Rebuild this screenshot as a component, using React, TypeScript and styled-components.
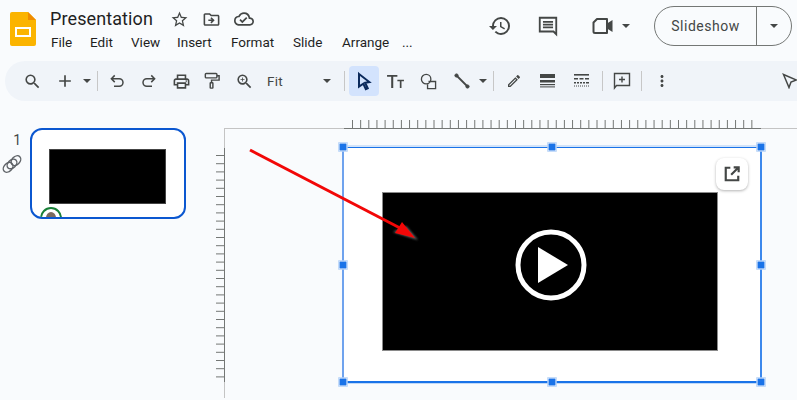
import React from "react";
import styled, { createGlobalStyle } from "styled-components";
import {
  MdSearch, MdAdd, MdOutlinePrint, MdZoomIn, MdStarBorder,
  MdOutlineDriveFileMove, MdOutlineCloudDone, MdHistory, MdMoreVert,
  MdOutlineEdit,
} from "react-icons/md";

const Global = createGlobalStyle`
  html, body { margin: 0; padding: 0; width: 797px; height: 400px; overflow: hidden; background: #f9fbfd; }
  * { box-sizing: border-box; }
  body { font-family: Roboto, "Liberation Sans", sans-serif; color: #1f1f1f; }
`;

const Page = styled.div`
  width: 797px; height: 400px; overflow: hidden; display: flex; flex-direction: column; background: #f9fbfd;
`;
const Header = styled.header`
  height: 61px; flex: none; display: flex; align-items: flex-start; padding: 6px 0 0 10px;
`;
const Logo = styled.svg`
  width: 26px; height: 34px; margin-top: 6px; flex: none;
`;
const TitleBlock = styled.div`
  margin-left: 14px; width: 395px; display: flex; flex-direction: column;
`;
const TitleRow = styled.div`
  display: flex; align-items: center; height: 26px;
`;
const Title = styled.span`
  font-size: 18px; line-height: 26px; color: #1f1f1f; width: 120px; letter-spacing: 0.1px;
`;
const TitleIcons = styled.div`
  display: flex; align-items: center; gap: 13px; color: #444746; font-size: 18px;
  svg { display: block; }
`;
const Menu = styled.nav`
  display: flex; font-size: 13.5px; line-height: 18px; margin-top: 1px; margin-left: 1px; color: #1f1f1f; white-space: nowrap;
`;
const MenuItem = styled.span<{ $w: number }>`
  width: ${(p) => p.$w}px;
`;
const Actions = styled.div`
  display: flex; align-items: center; margin-left: 43px; color: #444746; height: 40px;
`;
const ActionIcon = styled.span<{ $w: number }>`
  width: ${(p) => p.$w}px; display: flex; align-items: center; font-size: 24px;
  svg { display: block; }
`;
const Caret = styled.span`
  display: inline-block; width: 0; height: 0; flex: none;
  border-left: 4px solid transparent; border-right: 4px solid transparent; border-top: 4px solid #444746;
`;
const SlideshowGroup = styled.div`
  margin-left: 24px; width: 138px; height: 40px; border: 1px solid #747775; border-radius: 20px;
  display: flex; align-items: stretch; font-size: 14px; color: #444746; flex: none;
`;
const SlideshowMain = styled.div`
  width: 102px; display: flex; align-items: center; justify-content: center;
  border-right: 1px solid #747775; letter-spacing: 0.5px;
`;
const SlideshowCaret = styled.div`
  flex: 1; display: flex; align-items: center; justify-content: center;
`;
const Toolbar = styled.div`
  height: 40px; flex: none; margin-left: 5px; background: #f0f4f9; border-radius: 20px 0 0 20px;
  display: flex; align-items: center; padding-left: 12px; color: #444746; font-size: 18px;
  svg { display: block; flex: none; }
`;
const ToolSlot = styled.div<{ $w: number; $active?: boolean }>`
  width: ${(p) => p.$w}px; height: 30px; flex: none; display: flex; align-items: center; justify-content: center;
  background: ${(p) => (p.$active ? "#d3e3fd" : "transparent")}; border-radius: 4px;
`;
const Sep = styled.div<{ $l: number; $r?: number }>`
  width: 1px; height: 20px; background: #c7c7c7; flex: none;
  margin: 0 ${(p) => p.$r ?? 0}px 0 ${(p) => p.$l}px;
`;
const FitLabel = styled.span`
  width: 59px; flex: none; font-size: 13.5px; color: #444746; padding-left: 3px; letter-spacing: 0.3px;
`;
const Main = styled.main`
  flex: 1; display: flex; min-height: 0;
`;
const Filmstrip = styled.aside`
  width: 224px; flex: none; display: flex; align-items: flex-start; padding: 27px 0 0 0;
`;
const NumberCol = styled.div`
  width: 30px; flex: none; display: flex; flex-direction: column; align-items: flex-end; padding: 3px 9px 0 0;
  font-size: 14px; color: #444746; line-height: 18px;
`;
const LinkGlyph = styled.svg`
  width: 20px; height: 20px; margin-top: 5px; margin-right: -1px; display: block;
`;
const Thumb = styled.div`
  position: relative; width: 156px; height: 91px; background: #fff; border: 2px solid #0b57d0; border-radius: 12px;
  display: flex; align-items: flex-start; justify-content: center; overflow: hidden; padding-top: 19px;
`;
const ThumbVideo = styled.div`
  width: 117px; height: 55px; background: #000; border: 1px solid #444; margin-right: 1px;
`;
const Avatar = styled.div`
  position: absolute; left: 8px; top: 77px; width: 22px; height: 22px; border-radius: 50%;
  border: 2px solid #188038; background: #fff; overflow: hidden;
  &::after { content: ""; position: absolute; left: 4px; top: 3px; width: 10px; height: 12px; border-radius: 50%; background: #7a6a5e; }
`;
const Canvas = styled.section`
  position: relative; flex: 1; padding: 46px 0 0 119px;
`;
const Ruler = styled.svg`
  position: absolute; left: -8px; top: 27px; width: 581px; height: 271px; display: block; overflow: visible;
`;
const Slide = styled.div`
  position: relative; width: 418px; height: 235px; background: #fff; padding: 45px 0 0 39px;
`;
const Video = styled.div`
  width: 336px; height: 159px; background: #000; border: 1px solid #8a8a8a;
  display: flex; align-items: center; justify-content: center; padding: 0 0 14px 2px;
`;
const PopOut = styled.div`
  position: absolute; right: 13px; top: 11px; width: 32px; height: 32px; border-radius: 8px; background: #fff;
  box-shadow: 0 1px 3px rgba(0,0,0,.3); display: flex; align-items: center; justify-content: center;
  color: #444746;
  svg { display: block; }
`;
const Edge = styled.div<{ $side: "top" | "bottom" | "left" | "right" }>`
  position: absolute; background: #1a73e8;
  ${(p) => p.$side === "top" && "left:0;right:0;top:-0.5px;height:1.5px;box-shadow:0 -1.5px 0 rgba(26,115,232,.35);"}
  ${(p) => p.$side === "bottom" && "left:0;right:0;bottom:-0.5px;height:1.5px;box-shadow:0 1px 0 rgba(26,115,232,.25);"}
  ${(p) => p.$side === "left" && "top:0;bottom:0;left:-1.5px;width:2.5px;background:#6fa3ee;"}
  ${(p) => p.$side === "right" && "top:0;bottom:0;right:-1px;width:2px;background:#3d88ec;"}
`;
const Handle = styled.div<{ $x: string; $y: string }>`
  position: absolute; width: 7px; height: 7px; background: #1a73e8; border: 1px solid #fff; box-sizing: content-box;
  left: ${(p) => p.$x}; top: ${(p) => p.$y}; transform: translate(-50%, -50%);
`;
const ArrowOverlay = styled.svg`
  position: absolute; left: 26px; top: 49px; width: 180px; height: 100px; overflow: visible;
`;

const ticksTop = Array.from({ length: 50 }, (_, i) => 136.5 + i * 8.15);
const ticksLeft = Array.from({ length: 28 }, (_, i) => 27.5 + i * 8.2);

export default function App() {
  const handles: [string, string][] = [
    ["0%", "0%"], ["50%", "0%"], ["100%", "0%"], ["0%", "50%"], ["100%", "50%"], ["0%", "100%"], ["50%", "100%"], ["100%", "100%"],
  ];
  return (
    <Page>
      <Global />
      <Header>
        <Logo viewBox="0 0 26 34">
          <path d="M2 0h16l8 8v24a2 2 0 0 1-2 2H2a2 2 0 0 1-2-2V2a2 2 0 0 1 2-2z" fill="#fbb400" />
          <path d="M18 0l8 8h-8z" fill="#ef8c00" />
          <path d="M5 15h16v10H5z M7 17v6h12v-6z" fill="#fff" fillRule="evenodd" />
        </Logo>
        <TitleBlock>
          <TitleRow>
            <Title>Presentation</Title>
            <TitleIcons>
              <MdStarBorder size={19} />
              <MdOutlineDriveFileMove size={19} />
              <MdOutlineCloudDone size={20} />
            </TitleIcons>
          </TitleRow>
          <Menu>
            <MenuItem $w={39}>File</MenuItem>
            <MenuItem $w={41}>Edit</MenuItem>
            <MenuItem $w={46}>View</MenuItem>
            <MenuItem $w={54}>Insert</MenuItem>
            <MenuItem $w={62}>Format</MenuItem>
            <MenuItem $w={49}>Slide</MenuItem>
            <MenuItem $w={60}>Arrange</MenuItem>
            <MenuItem $w={12}>...</MenuItem>
          </Menu>
        </TitleBlock>
        <Actions>
          <ActionIcon $w={49}><MdHistory size={24} /></ActionIcon>
          <ActionIcon $w={55}>
            <svg width="22" height="22" viewBox="0 0 24 24" fill="none" stroke="currentColor" strokeWidth="2">
              <path d="M3 3h18v18l-3-3H3z" />
              <path d="M6.500 7.500h11M6.500 10.500h11M6.500 13.500h11" strokeWidth="1.800" />
            </svg>
          </ActionIcon>
          <ActionIcon $w={30}>
            <svg width="22" height="18" viewBox="0 0 22 18" fill="none" stroke="currentColor" strokeWidth="2">
              <path d="M5 2h10v14H3a1.500 1.500 0 0 1-1.500-1.500V5.500z" strokeLinejoin="round" />
              <path d="M15 6.500l5.500-3.500v12l-5.500-3.500z" fill="currentColor" stroke="none" />
            </svg>
          </ActionIcon>
          <Caret />
          <SlideshowGroup>
            <SlideshowMain>Slideshow</SlideshowMain>
            <SlideshowCaret><Caret /></SlideshowCaret>
          </SlideshowGroup>
        </Actions>
      </Header>
      <Toolbar>
        <ToolSlot $w={30}><MdSearch size={19} /></ToolSlot>
        <ToolSlot $w={36}><MdAdd size={20} /></ToolSlot>
        <ToolSlot $w={8}><Caret /></ToolSlot>
        <Sep $l={6} />
        <ToolSlot $w={38}>
          <svg width="18" height="18" viewBox="0 0 24 24" fill="none" stroke="currentColor" strokeWidth="2"><path d="M9 4.500L4.500 9 9 13.500M4.500 9H15a5 5 0 0 1 0 10H8" /></svg>
        </ToolSlot>
        <ToolSlot $w={26}>
          <svg width="18" height="18" viewBox="0 0 24 24" fill="none" stroke="currentColor" strokeWidth="2"><path d="M15 4.500L19.500 9 15 13.500M19.500 9H9a5 5 0 0 0 0 10h7" /></svg>
        </ToolSlot>
        <ToolSlot $w={38}><MdOutlinePrint size={19} /></ToolSlot>
        <ToolSlot $w={24}>
          <svg width="16" height="18" viewBox="0 0 18 19" fill="none" stroke="currentColor" strokeWidth="1.600"><rect x="1.500" y="1" width="13" height="5" rx="1" /><path d="M14.500 3.500h2.500v5H8.500v3" /><rect x="7" y="11.500" width="3" height="6" rx=".5" /></svg>
        </ToolSlot>
        <ToolSlot $w={40}><MdZoomIn size={19} /></ToolSlot>
        <FitLabel>Fit</FitLabel>
        <ToolSlot $w={8}><Caret /></ToolSlot>
        <Sep $l={13} $r={4} />
        <ToolSlot $w={30} $active>
          <svg width="20" height="20" viewBox="0 0 24 24" fill="none" stroke="#0b2a5c" strokeWidth="2.400" strokeLinejoin="miter"><path d="M6 3.500l12.500 9.800-5 .9 3 6.500-2.300 1.100-3-6.500-5.200 3.500z" /></svg>
        </ToolSlot>
        <ToolSlot $w={32}>
          <svg width="17" height="15" viewBox="0 0 18 16" fill="currentColor"><path d="M0 1h11v2H6.600V15H4.400V3H0z" /><path d="M11 6h7v1.600h-2.600V15h-1.800V7.600H11z" /></svg>
        </ToolSlot>
        <ToolSlot $w={34}>
          <svg width="17" height="17" viewBox="0 0 18 18" fill="none" stroke="currentColor" strokeWidth="1.400"><circle cx="6.500" cy="6.500" r="5" /><path d="M9 9h7.500v7.500H8V12" /></svg>
        </ToolSlot>
        <ToolSlot $w={34}>
          <svg width="16" height="16" viewBox="0 0 16 16" fill="currentColor" stroke="currentColor"><path d="M2 2l12 12" strokeWidth="1.800" /><circle cx="2.500" cy="2.500" r="1.600" /><circle cx="13.500" cy="13.500" r="1.600" /></svg>
        </ToolSlot>
        <ToolSlot $w={8}><Caret /></ToolSlot>
        <Sep $l={6} />
        <ToolSlot $w={40}><MdOutlineEdit size={16} /></ToolSlot>
        <ToolSlot $w={28}>
          <svg width="16" height="14" viewBox="0 0 16 14" fill="currentColor"><rect y="0" width="15" height="4" /><rect y="6" width="15" height="2.500" /><rect y="10" width="15" height="1.200" /><rect y="12.400" width="15" height="1" /></svg>
        </ToolSlot>
        <ToolSlot $w={40}>
          <svg width="16" height="14" viewBox="0 0 16 14" fill="currentColor"><rect y="0" width="15" height="1.600" /><path d="M0 4h4v1.500H0zM5.500 4h4v1.500h-4zM11 4h4v1.500h-4z" /><path d="M0 8h2v1.400H0zM3 8h2v1.400H3zM6 8h2v1.400H6zM9 8h2v1.400H9zM12 8h3v1.400h-3z" /><path d="M0 11.500h1v1H0zM2 11.500h1v1H2zM4 11.500h1v1H4zM6 11.500h1v1H6zM8 11.500h1v1H8zM10 11.500h1v1h-1zM12 11.500h1v1h-1zM14 11.500h1v1h-1z" /></svg>
        </ToolSlot>
        <Sep $l={0} />
        <ToolSlot $w={38}>
          <svg width="18" height="18" viewBox="0 0 18 18" fill="none" stroke="currentColor" strokeWidth="1.400"><path d="M1.500 1.500h15v12h-13l-2 2.500z" /><path d="M9 4.500v6M6 7.500h6" /></svg>
        </ToolSlot>
        <Sep $l={0} />
        <ToolSlot $w={40}><MdMoreVert size={18} /></ToolSlot>
        <ToolSlot $w={216}>
          <svg width="16" height="16" viewBox="0 0 16 16" fill="none" stroke="currentColor" strokeWidth="1.500"><path d="M1.500 1.500l13 5.500-5.500 2-2 5.500z" /></svg>
        </ToolSlot>
      </Toolbar>
      <Main>
        <Filmstrip>
          <NumberCol>
            <span>1</span>
            <LinkGlyph viewBox="0 0 18 18" fill="none" stroke="#5f6368" strokeWidth="1.300">
              <ellipse cx="5.500" cy="12" rx="5" ry="3.600" transform="rotate(-45 5.500 12)" />
              <ellipse cx="9" cy="9" rx="5" ry="3.600" transform="rotate(-45 9 9)" />
              <ellipse cx="12.500" cy="6" rx="5" ry="3.600" transform="rotate(-45 12.500 6)" />
            </LinkGlyph>
          </NumberCol>
          <Thumb>
            <ThumbVideo />
            <Avatar />
          </Thumb>
        </Filmstrip>
        <Canvas>
          <Ruler viewBox="0 0 581 271">
            <path d="M8 .5H581M8.500 0V270" stroke="#c4c4c4" strokeWidth="1" fill="none" />
            <path d="M128 .5H545" stroke="#747775" strokeWidth="1" fill="none" />
            <path d="M8.500 20V254" stroke="#747775" strokeWidth="1" fill="none" />
            {ticksTop.map((x) => <path key={x} d={`M${x} -8V0`} stroke="#747775" strokeWidth="1" />)}
            {ticksLeft.map((y) => <path key={y} d={`M0 ${y}H8`} stroke="#747775" strokeWidth="1" />)}
          </Ruler>
          <Slide>
            <Video>
              <svg width="72" height="72" viewBox="0 0 72 72">
                <circle cx="36" cy="36" r="33" fill="none" stroke="#fff" strokeWidth="5" />
                <path d="M23 18L53 36L23 54z" fill="#fff" />
              </svg>
            </Video>
            <PopOut>
              <svg width="20" height="20" viewBox="0 0 24 24" fill="none" stroke="currentColor" strokeWidth="2.600"><path d="M10 4.500H4.500v15h15V14M14 4h6v6M20 4l-9 9" /></svg>
            </PopOut>
            <Edge $side="top" /><Edge $side="bottom" /><Edge $side="left" /><Edge $side="right" />
            {handles.map(([x, y]) => <Handle key={x + y} $x={x} $y={y} />)}
          </Slide>
          <ArrowOverlay viewBox="0 0 180 100">
            <defs>
              <filter id="sh" x="-30%" y="-30%" width="160%" height="160%"><feGaussianBlur stdDeviation="1" /></filter>
            </defs>
            <path d="M143 82L168 90L156 76z" fill="#6a6a6a" filter="url(#sh)" />
            <path d="M0 0L150 78" stroke="#f20707" strokeWidth="3" fill="none" />
            <path d="M152 72L145 83L165 88z" fill="#f20707" />
          </ArrowOverlay>
        </Canvas>
      </Main>
    </Page>
  );
}
